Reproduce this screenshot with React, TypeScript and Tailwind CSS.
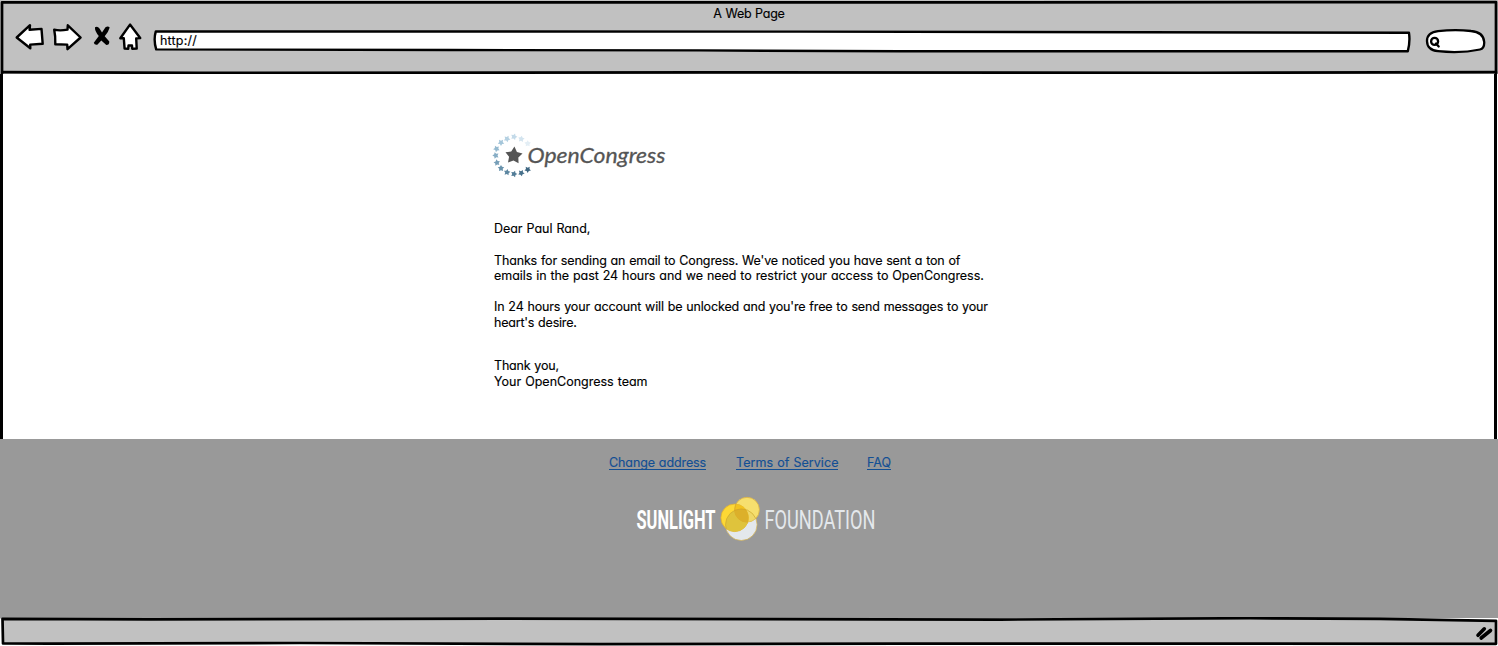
import React from "react";

const ink = { stroke: "#000", strokeWidth: 2.7, strokeLinejoin: "round" as const, strokeLinecap: "round" as const };

function star(cx: number, cy: number, r: number, tilt = 0) {
  return Array.from({ length: 10 }, (_, i) => {
    const a = ((i * 36 - 90 + tilt) * Math.PI) / 180;
    const d = i % 2 ? r * 0.54 : r;
    return `${(cx + d * Math.cos(a)).toFixed(2)},${(cy + d * Math.sin(a)).toFixed(2)}`;
  }).join(" ");
}

const RING: [number, number, string][] = [
  [47.7, 23.6, "#e3eef5"],
  [41.3, 19, "#d3e4ef"],
  [34, 16.8, "#c3dae9"],
  [27, 18.9, "#b5d1e2"],
  [21, 22.6, "#a5c6da"],
  [16.5, 28.8, "#95bad0"],
  [15.7, 35.4, "#86adc5"],
  [16.9, 42.7, "#779fb8"],
  [21, 48.3, "#6993ac"],
  [27, 52.3, "#5d87a1"],
  [34, 54, "#527c97"],
  [41.3, 53, "#48718c"],
  [47.7, 49.5, "#3e6681"],
];

function CongressLogo() {
  return (
    <svg className="block h-[70px] w-[200px]" viewBox="0 0 200 70" role="img">
      {RING.map(([x, y, c], i) => (
        <polygon key={i} points={star(x, y, 3.4, i * 9)} fill={c} />
      ))}
      <polygon points={star(33.8, 35.6, 9, 4)} fill="#555" />
      <text x="47.5" y="43.3" textLength="138" lengthAdjust="spacingAndGlyphs" stroke="#555" strokeWidth="0.3" className="fill-[#555] font-['Lato',sans-serif] text-[21.5px] italic">
        OpenCongress
      </text>
    </svg>
  );
}

function SunlightLogo() {
  return (
    <svg className="block h-[50px] w-[320px]" viewBox="634 495 320 50" role="img">
      <text x="636.5" y="528.7" textLength="79" lengthAdjust="spacingAndGlyphs" className="fill-white font-['Roboto',sans-serif] text-[25.5px] font-bold">
        SUNLIGHT
      </text>
      <circle cx="741.3" cy="524.7" r="15.8" fill="#e4e8ec" stroke="#d4b04c" strokeWidth="0.7" />
      <circle cx="747" cy="509.7" r="12.4" fill="#fde46a" fillOpacity="0.93" stroke="#dcb244" strokeWidth="0.8" />
      <circle cx="734.7" cy="517.8" r="13.8" fill="#fdd835" stroke="#dcae35" strokeWidth="0.8" />
      <clipPath id="left-disc"><circle cx="734.7" cy="517.8" r="13.8" /></clipPath>
      <clipPath id="top-disc"><circle cx="747" cy="509.7" r="12.4" /></clipPath>
      <circle cx="741.3" cy="524.7" r="15.8" fill="#dfc33c" stroke="#cda92f" strokeWidth="0.7" clipPath="url(#left-disc)" />
      <circle cx="741.3" cy="524.7" r="15.8" fill="#e8cf62" stroke="#cda92f" strokeWidth="0.7" clipPath="url(#top-disc)" fillOpacity="0.6" />
      <g clipPath="url(#left-disc)">
        <circle cx="747" cy="509.7" r="12.4" fill="#f2c21f" stroke="#d6a52c" strokeWidth="0.8" />
        <g clipPath="url(#top-disc)">
          <circle cx="741.3" cy="524.7" r="15.8" fill="#dcb02a" stroke="#cda02c" strokeWidth="0.7" />
        </g>
      </g>
      <text x="764.5" y="528.7" textLength="111" lengthAdjust="spacingAndGlyphs" className="fill-[#e4e8ec] font-['Roboto',sans-serif] text-[25.5px] font-normal">
        FOUNDATION
      </text>
    </svg>
  );
}

function NavIcons() {
  return (
    <svg className="block h-[34px] w-[134px] shrink-0" viewBox="12 20 134 34" fill="#fff" {...ink} strokeWidth={2.4}>
      <path d="M16.7 37.5 30 25.2 29.6 29.8 41.5 28.9 42.7 43.8 30.2 44.6 30.3 48.2Z" />
      <path d="M54.2 29.7Q60 31 67.5 29.6L67.8 25.3 80.6 37.5 67.5 49.2 67.2 44.6 55.3 44.2Q55.6 36 54.2 29.7Z" />
      <path d="M95 27.3Q97.5 25.5 99.5 28.5L102 32.5 105.5 27.2Q108 25.5 109.7 27.5 108.5 32 104.7 36.2L109.3 41.5Q109.5 45 106.3 45L101.3 40.5 97.3 44.7Q94.5 45.3 93.8 42.7L98.8 36Q94.5 31 95 27.3Z" fill="#000" stroke="none" />
      <path d="M130 24.6 120.3 38.2 123.8 38.3 124.6 48.6 128.2 48.8 128.5 45.5 132 45.5 132.2 48.8 136.7 48.5 136.2 38.4 140.2 38Z" />
    </svg>
  );
}

const body = "font-['Inter','Noto_Sans',sans-serif] text-[12.5px] font-normal [-webkit-text-stroke:0.15px] leading-[16px] [word-spacing:0.5px] [font-feature-settings:'cv11'] whitespace-nowrap text-black";

function BrowserBar() {
  return (
    <header className="relative h-[74px] bg-[#c1c1c1]">
      <svg className="absolute inset-0 h-[74px] w-[1498px]" viewBox="0 0 1498 74" fill="none" {...ink}>
        <path d="M2 74V2.4H900L1496 2V74" />
        <path d="M2.5 72.2 200 72.9 700 72.3 1200 72.8 1496 72.2" />
      </svg>
      <div className={`${body} flex h-[20px] justify-center pt-[6px]`}>
        <span className="tracking-[-0.25px]">A Web Page</span>
      </div>
      <div className="flex pl-[12px]">
        <NavIcons />
        <div className="relative ml-[6px] h-[34px] w-[1262px] shrink-0">
          <svg className="absolute inset-0 h-[34px] w-[1262px]" viewBox="152 20 1262 34" fill="#fff" {...ink} strokeWidth={2.4}>
            <path d="M155.8 31.4 800 31.6 1409 32.8Q1410.3 42 1407.8 51.2L900 51.3 700 50.4 450 50 156.2 49.4Q153.3 40 155.8 31.4Z" />
          </svg>
          <span className={`${body} relative block pl-[8px] pt-[13px] tracking-[0.2px]`}>http://</span>
        </div>
        <svg className="ml-[8px] block h-[34px] w-[68px] shrink-0" viewBox="1422 20 68 34" fill="#fff" {...ink} strokeWidth={2.3}>
          <path d="M1427 41Q1427 32.5 1438 31.2 1455 29 1471 31 1483.5 32 1484.2 42 1484.5 48.5 1480 49.5 1461 53.5 1438 51.2 1427 50 1427 41Z" />
          <circle cx="1434.6" cy="41.4" r="3.5" />
          <path d="M1436 43.5 1438.7 46.5" />
        </svg>
      </div>
    </header>
  );
}

export default function App() {
  return (
    <div className="flex h-[646px] w-[1498px] flex-col overflow-hidden bg-white">
      <BrowserBar />
      <main className="mr-px h-[365px] border-l-[3px] border-r-[3px] border-black bg-white pl-[477px] pt-[46px]">
        <CongressLogo />
        <div className={`${body} pl-[14px] pt-[31px]`}>
          <p className="tracking-[-0.03px]">Dear Paul Rand,</p>
          <p className="mt-[16px] tracking-[-0.15px]">Thanks for sending an email to Congress. We've noticed you have sent a ton of</p>
          <p className="-mt-px tracking-[-0.055px]">emails in the past 24 hours and we need to restrict your access to OpenCongress.</p>
          <p className="mt-[15px] tracking-[-0.14px]">In 24 hours your account will be unlocked and you're free to send messages to your</p>
          <p className="tracking-[-0.2px]">heart's desire.</p>
          <p className="mt-[27px] tracking-[-0.18px]">Thank you,</p>
          <p>Your OpenCongress team</p>
        </div>
      </main>
      <footer className="flex h-[178px] flex-col bg-[#999] pt-[16px]">
        <nav className={`${body} flex pl-[609px]`}>
          <a className="h-[15px] w-[97px] border-b border-[#134f94] tracking-[-0.1px] text-[#134f94]">Change address</a>
          <a className="ml-[30px] h-[15px] w-[102px] border-b border-[#134f94] tracking-[0.05px] text-[#134f94]">Terms of Service</a>
          <a className="ml-[29px] h-[15px] w-[24px] border-b border-[#134f94] text-[#134f94]">FAQ</a>
        </nav>
        <div className="pl-[634px] pt-[25px]">
          <SunlightLogo />
        </div>
      </footer>
      <svg className="block h-[29px] w-[1498px]" viewBox="0 617 1498 29" fill="none" {...ink}>
        <rect x="0" y="617" width="1498" height="29" fill="#fff" stroke="none" />
        <path d="M0 617H1498V618H1440L1200 618.5H0Z" fill="#999" stroke="none" />
        <path d="M2.5 618.8 150 619.4 500 618.7 1000 619.6 1250 618.2 1380 618.8 1496 620.8V643.8L900 643.6 600 644.2 300 643 50 643.6 3 643.5Z" fill="#c1c1c1" />
        <path d="M1478 635.3 1484.3 628.8M1481.2 638 1490.5 630.5" strokeWidth="3.6" />
      </svg>
    </div>
  );
}
